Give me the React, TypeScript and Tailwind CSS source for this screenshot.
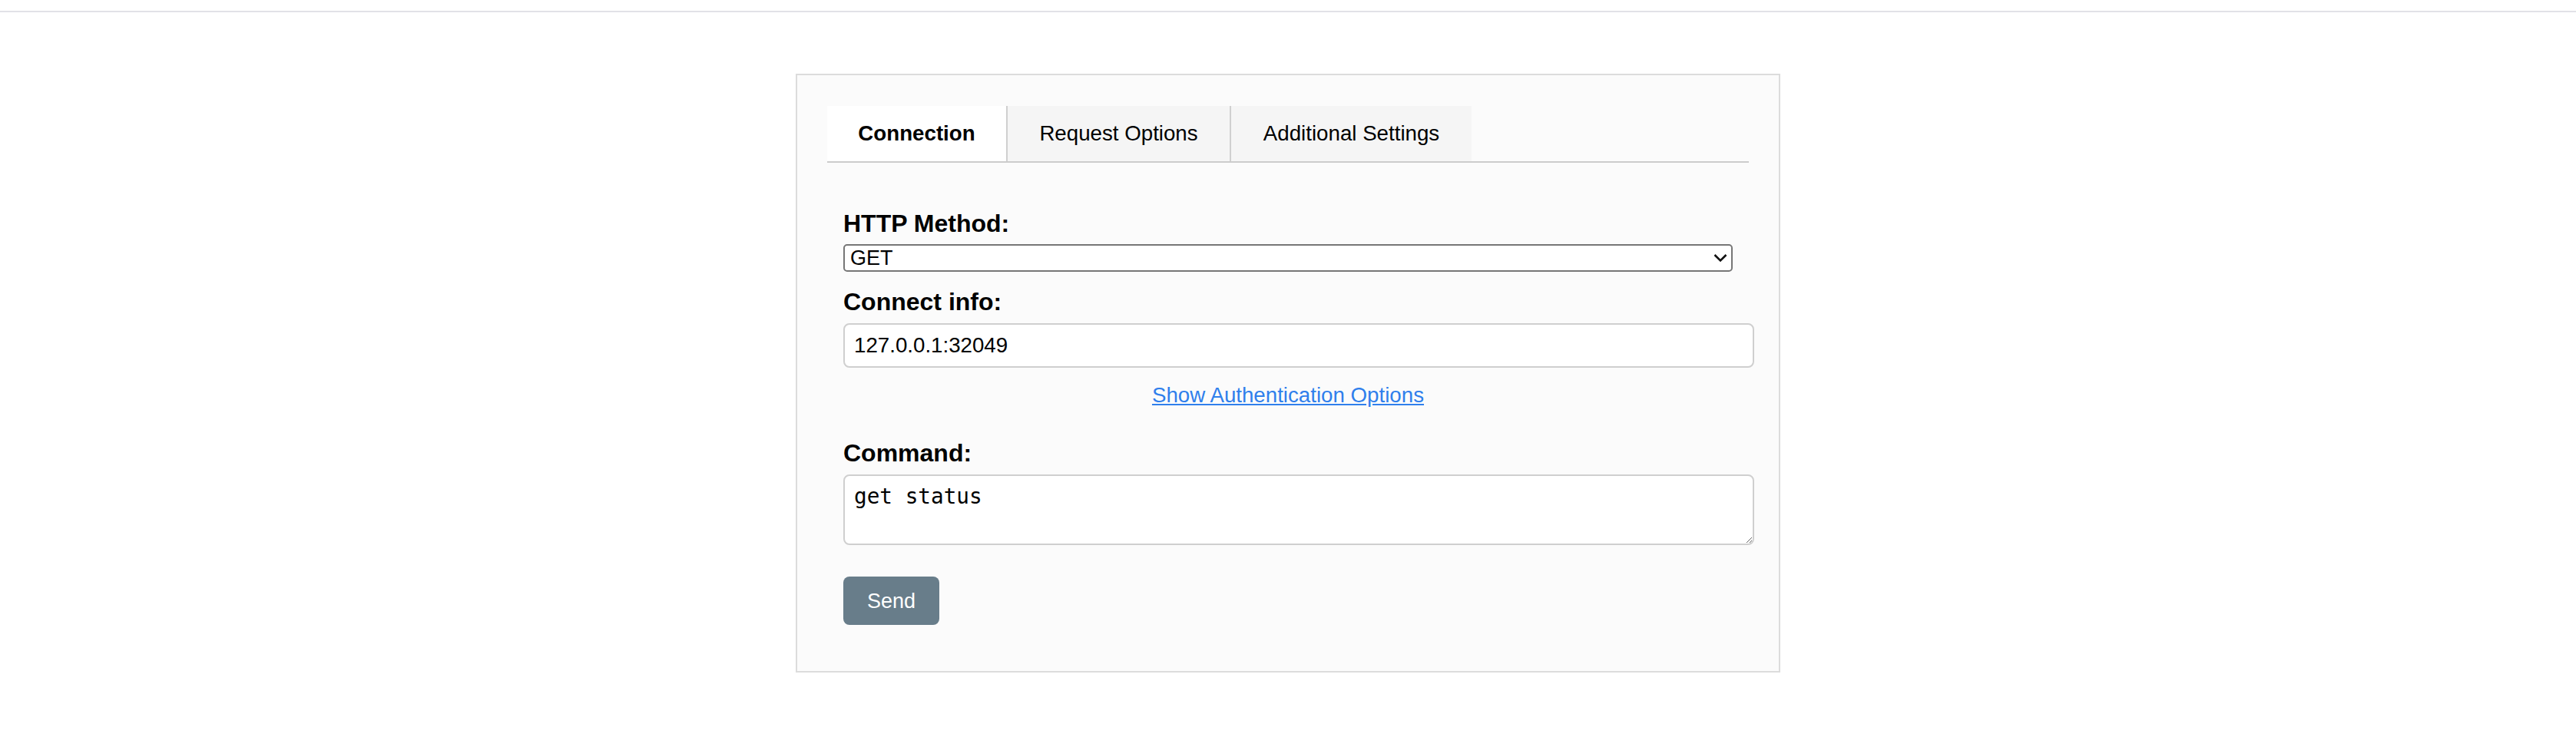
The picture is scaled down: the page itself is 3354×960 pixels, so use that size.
import React from 'react';

const tabs = [
  { label: 'Connection', width: 'w-[235px]', active: true },
  { label: 'Request Options', width: 'w-[291px]', active: false },
  { label: 'Additional Settings', width: 'w-[313px]', active: false },
];

const App = () => {
  return (
    <div className="min-h-screen bg-white pt-[14px] font-['Liberation_Sans',Arial,sans-serif] text-black">
      <div className="h-[2px] bg-[#e2e2e7]" />

      {/* Request panel */}
      <div className="mx-auto mt-[80px] w-[1282px] border-2 border-[#dcdcdc] bg-[#fbfbfb] px-[39px] pt-[40px] pb-[39px]">
        {/* Tabs */}
        <div className="flex border-b-2 border-[#cccccc]">
          {tabs.map((tab, i) => (
            <div
              key={tab.label}
              className={`flex h-[72px] items-center justify-center text-[27.7px] leading-[32px] ${tab.width} ${
                tab.active ? 'bg-white font-bold' : 'bg-[#f5f5f5]'
              } ${i < tabs.length - 1 ? 'border-r-2 border-[#d0d0d0]' : ''}`}
            >
              {tab.label}
            </div>
          ))}
        </div>

        {/* Connection tab content */}
        <div className="px-[21px] pt-[61px] pb-[21px]">
          <label className="block text-[32px] leading-[37px] font-bold">HTTP Method:</label>
          <div className="relative mt-[8px] h-[36px] w-full">
            <select
              defaultValue="GET"
              className="h-[36px] w-full appearance-none rounded-[5px] border-2 border-[#767676] bg-white pl-[7px] text-[27px] leading-[32px] text-black"
            >
              <option>GET</option>
              <option>POST</option>
              <option>PUT</option>
              <option>DELETE</option>
            </select>
            <svg
              className="pointer-events-none absolute top-1/2 right-[7px] -translate-y-1/2"
              width="18"
              height="11"
              viewBox="0 0 18 11"
              fill="none"
            >
              <path d="M1.5 1.5 L9 9 L16.5 1.5" stroke="#111" strokeWidth="2.6" />
            </svg>
          </div>

          <label className="mt-[21px] block text-[32px] leading-[37px] font-bold">Connect info:</label>
          <input
            type="text"
            defaultValue="127.0.0.1:32049"
            className="mt-[9px] block h-[58px] w-[1186px] rounded-[8px] border-2 border-[#cfcfcf] bg-white px-[12px] text-[27.7px] leading-[32px] text-black outline-none"
          />

          <div className="mt-[20px] text-center text-[27.7px] leading-[32px]">
            <a href="#" className="text-[#2f7fec] underline">
              Show Authentication Options
            </a>
          </div>

          <label className="mt-[41px] block text-[32px] leading-[37px] font-bold">Command:</label>
          <textarea
            defaultValue="get status"
            className="mt-[9px] block h-[92px] w-[1186px] rounded-[8px] border-2 border-[#cfcfcf] bg-white px-[12px] py-[11px] font-['DejaVu_Sans_Mono',monospace] text-[27.7px] leading-[32px] text-black outline-none"
          />

          <button className="mt-[41px] block h-[63px] rounded-[8px] bg-[#687d8a] px-[31px] text-[27px] leading-[32px] text-white">
            Send
          </button>
        </div>
      </div>
    </div>
  );
};

export default App;
